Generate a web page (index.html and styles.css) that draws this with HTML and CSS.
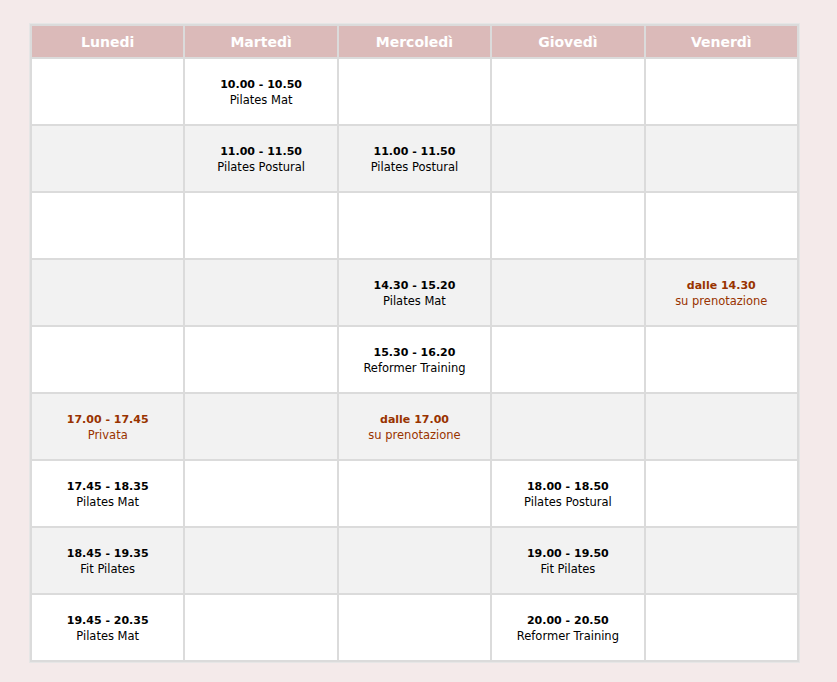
FILE: index.html
```html
<!DOCTYPE html>
<html lang="it">
<head>
<meta charset="utf-8">
<title>Orari</title>
<link rel="stylesheet" href="styles.css">
</head>
<body>
<div class="page">
<table class="schedule">
  <thead>
    <tr>
      <th>Lunedi</th><th>Martedì</th><th>Mercoledì</th><th>Giovedì</th><th>Venerdì</th>
    </tr>
  </thead>
  <tbody>
    <tr>
      <td></td>
      <td><b>10.00 - 10.50</b><span>Pilates Mat</span></td>
      <td></td><td></td><td></td>
    </tr>
    <tr class="alt">
      <td></td>
      <td><b>11.00 - 11.50</b><span>Pilates Postural</span></td>
      <td><b>11.00 - 11.50</b><span>Pilates Postural</span></td>
      <td></td><td></td>
    </tr>
    <tr>
      <td></td><td></td><td></td><td></td><td></td>
    </tr>
    <tr class="alt">
      <td></td><td></td>
      <td><b>14.30 - 15.20</b><span>Pilates Mat</span></td>
      <td></td>
      <td class="red"><b>dalle 14.30</b><span>su prenotazione</span></td>
    </tr>
    <tr>
      <td></td><td></td>
      <td><b>15.30 - 16.20</b><span>Reformer Training</span></td>
      <td></td><td></td>
    </tr>
    <tr class="alt">
      <td class="red"><b>17.00 - 17.45</b><span>Privata</span></td>
      <td></td>
      <td class="red"><b>dalle 17.00</b><span>su prenotazione</span></td>
      <td></td><td></td>
    </tr>
    <tr>
      <td><b>17.45 - 18.35</b><span>Pilates Mat</span></td>
      <td></td><td></td>
      <td><b>18.00 - 18.50</b><span>Pilates Postural</span></td>
      <td></td>
    </tr>
    <tr class="alt">
      <td><b>18.45 - 19.35</b><span>Fit Pilates</span></td>
      <td></td><td></td>
      <td><b>19.00 - 19.50</b><span>Fit Pilates</span></td>
      <td></td>
    </tr>
    <tr>
      <td><b>19.45 - 20.35</b><span>Pilates Mat</span></td>
      <td></td><td></td>
      <td><b>20.00 - 20.50</b><span>Reformer Training</span></td>
      <td></td>
    </tr>
  </tbody>
</table>
</div>
</body>
</html>
```

FILE: styles.css
```css
html, body {
  margin: 0;
  padding: 0;
  background: #f4eaea;
}

.page {
  padding: 23px 0 0 29px;
}

.schedule {
  width: 771px;
  table-layout: fixed;
  border-collapse: separate;
  border-spacing: 2px;
  background: #dbdbdb;
  border: 1px solid #e6e6e6;
  font-family: "DejaVu Sans", Verdana, sans-serif;
}

.schedule th {
  height: 31px;
  padding: 0;
  background: #dbbab9;
  color: #ffffff;
  font-size: 14px;
  font-weight: bold;
  text-align: center;
  vertical-align: middle;
}

.schedule td {
  height: 63px;
  padding: 2px 0 0;
  background: #ffffff;
  text-align: center;
  vertical-align: middle;
  color: #000000;
}

.schedule tr.alt td {
  background: #f2f2f2;
}

.schedule td b {
  display: block;
  font-size: 11px;
  font-weight: bold;
  line-height: 16px;
}

.schedule td span {
  display: block;
  font-size: 11.5px;
  line-height: 15px;
}

.schedule td.red {
  color: #993300;
}
```
